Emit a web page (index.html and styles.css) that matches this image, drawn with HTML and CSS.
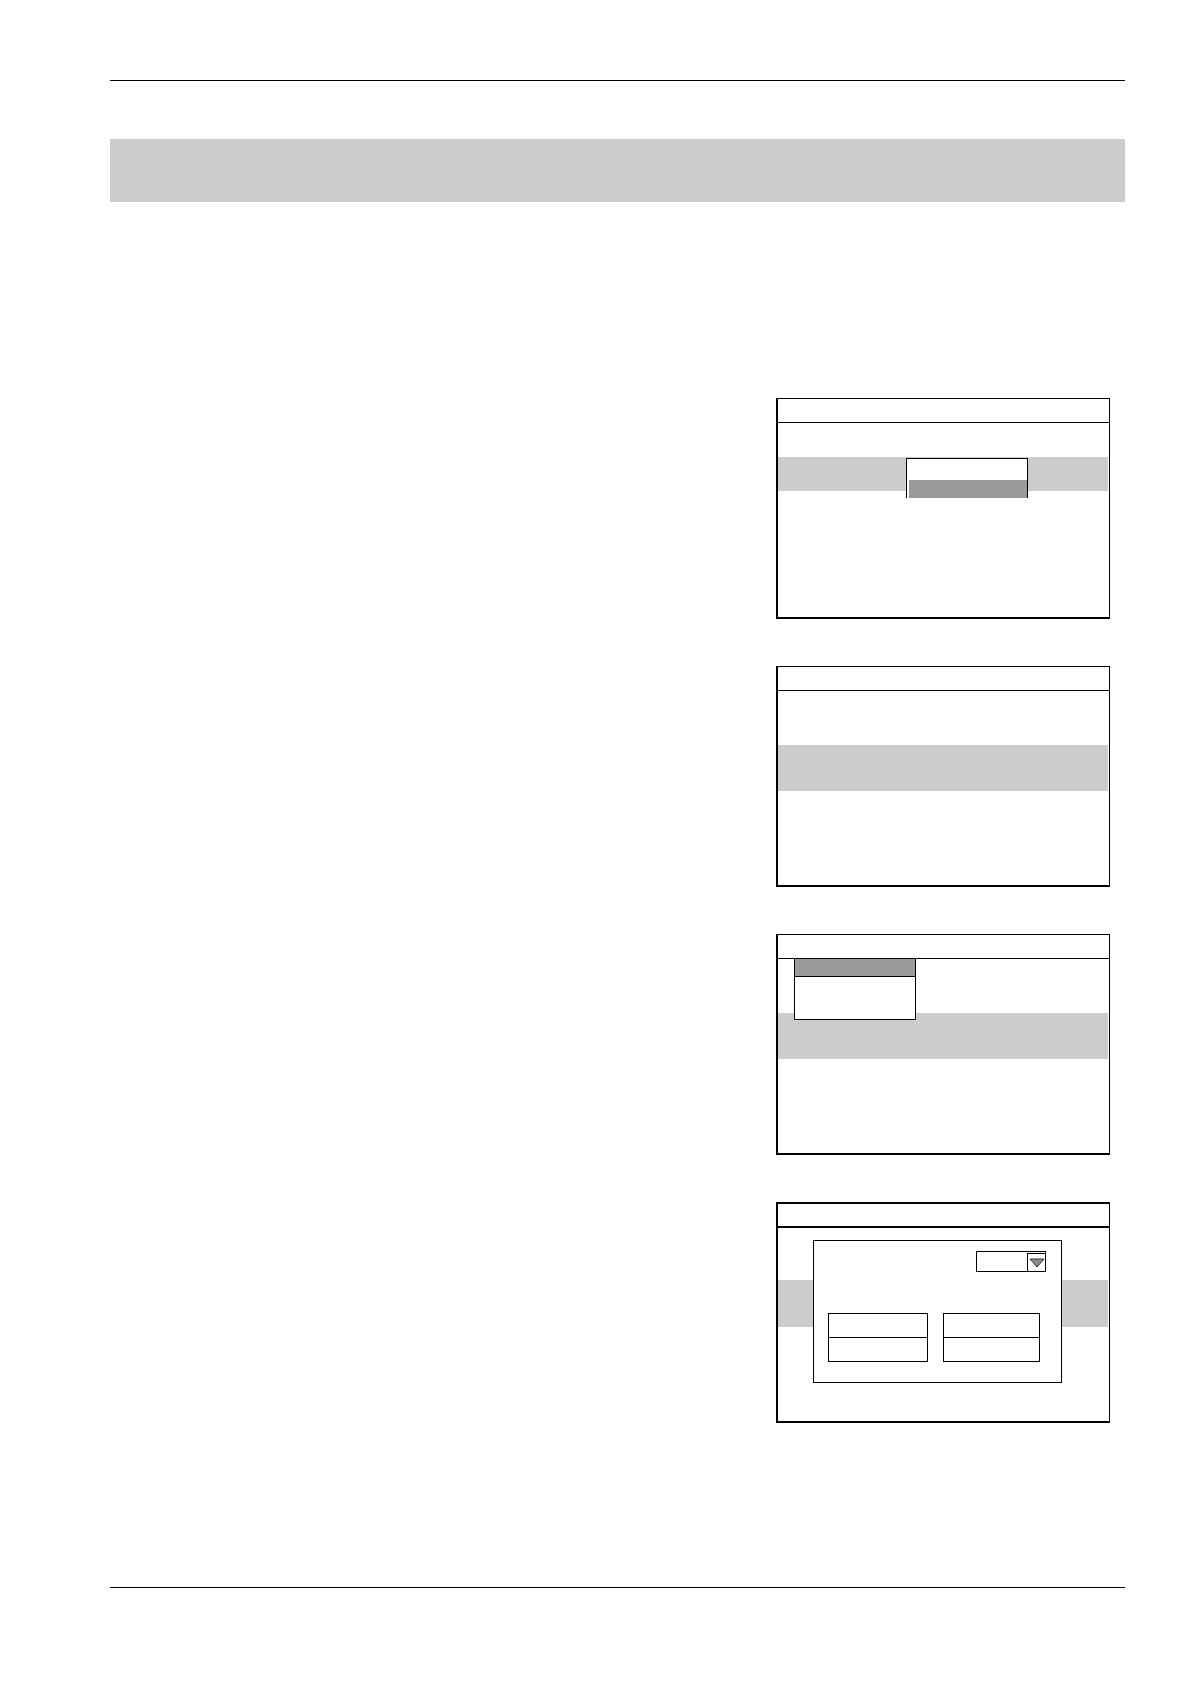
FILE: index.html
```html
<!DOCTYPE html>
<html lang="en">
<head>
<meta charset="utf-8">
<title>Page</title>
<link rel="stylesheet" href="styles.css">
</head>
<body>
<div class="page">
  <div class="rule"></div>
  <div class="banner"></div>
  <div class="content">
    <div class="text-col"></div>
    <div class="figures">
      <div class="win">
        <div class="titlebar"></div>
        <div class="win-body body-1">
          <div class="row row-1"></div>
          <div class="dropdown">
            <div class="dd-top"></div>
            <div class="dd-sel"></div>
          </div>
        </div>
      </div>
      <div class="win">
        <div class="titlebar"></div>
        <div class="win-body body-2">
          <div class="row row-2"></div>
        </div>
      </div>
      <div class="win">
        <div class="titlebar"></div>
        <div class="win-body body-2">
          <div class="row row-2"></div>
          <div class="menu">
            <div class="menu-head"></div>
          </div>
        </div>
      </div>
      <div class="win win-thick">
        <div class="titlebar"></div>
        <div class="win-body body-4">
          <div class="row row-2"></div>
          <div class="dialog">
            <div class="combo-row">
              <div class="combo">
                <div class="combo-field"></div>
                <div class="combo-btn">
                  <svg width="16" height="10" viewBox="0 0 16 10"><path d="M1 1 L15 1 L8 9 Z" fill="#8c8c8c" stroke="#333" stroke-width="1"/></svg>
                </div>
              </div>
            </div>
            <div class="btn-row">
              <div class="btn btn-left"><div class="btn-half"></div><div class="btn-half"></div></div>
              <div class="btn btn-right"><div class="btn-half"></div><div class="btn-half"></div></div>
            </div>
          </div>
        </div>
      </div>
    </div>
  </div>
  <div class="rule rule-bottom"></div>
</div>
</body>
</html>
```

FILE: styles.css
```css
html, body {
  margin: 0;
  padding: 0;
  background: #ffffff;
  font-family: "Liberation Sans", Arial, sans-serif;
}

.page {
  width: 1015px;
  margin-left: 110px;
  padding-top: 80px;
}

.rule {
  height: 1px;
  background: #000000;
}

.banner {
  margin-top: 58px;
  height: 63px;
  background: #cccccc;
}

.content {
  display: flex;
  margin-top: 196px;
}

.text-col {
  width: 666px;
  flex: none;
}

.figures {
  width: 334px;
  flex: none;
  display: flex;
  flex-direction: column;
  gap: 47px;
}

.win {
  box-sizing: border-box;
  height: 221px;
  border: 1px solid #000000;
  border-left-width: 2px;
  border-bottom-width: 2px;
  background: #ffffff;
}

.titlebar {
  height: 23px;
  border-bottom: 1px solid #000000;
}

.win-thick {
  border-top-width: 2px;
}

.win-thick .titlebar {
  height: 22px;
  border-bottom-width: 2px;
}

.win-body {
  position: relative;
}

.row {
  background: #cccccc;
  margin-right: 1px;
}

.body-1 {
  padding-top: 34px;
}

.row-1 {
  height: 34px;
}

.body-2 {
  padding-top: 54px;
}

.body-2 .row-2 {
  height: 46px;
}

.body-4 {
  padding-top: 52px;
}

.body-4 .row-2 {
  height: 47px;
}

.dropdown {
  position: absolute;
  left: 128px;
  top: 35px;
  width: 122px;
  height: 40px;
  box-sizing: border-box;
  border: 1px solid #000000;
  border-bottom: none;
  background: #ffffff;
  display: flex;
  flex-direction: column;
}

.dd-top {
  height: 21px;
}

.dd-sel {
  flex: 1;
  margin: 0 0 0 2px;
  background: #9a9a9a;
}

.menu {
  position: absolute;
  left: 16px;
  top: 0;
  width: 122px;
  height: 61px;
  box-sizing: border-box;
  border: 1px solid #000000;
  border-top: none;
  background: #ffffff;
}

.menu-head {
  height: 17px;
  background: #9a9a9a;
  border-bottom: 1px solid #000000;
}

.dialog {
  position: absolute;
  left: 35px;
  top: 12px;
  width: 249px;
  height: 143px;
  box-sizing: border-box;
  border: 1px solid #000000;
  background: #ffffff;
  padding: 10px 15px 0 14px;
}

.combo-row {
  display: flex;
  justify-content: flex-end;
}

.combo {
  width: 70px;
  height: 21px;
  box-sizing: border-box;
  border: 1px solid #000000;
  display: flex;
}

.combo-field {
  flex: 1;
}

.combo-btn {
  width: 18px;
  box-sizing: border-box;
  margin-top: 1px;
  border-left: 1px solid #000000;
  border-top: 1px solid #000000;
  display: flex;
  align-items: flex-start;
  justify-content: center;
  padding-top: 4px;
}

.combo-btn svg {
  display: block;
}

.btn-row {
  display: flex;
  gap: 15px;
  margin-top: 41px;
}

.btn {
  height: 49px;
  box-sizing: border-box;
  border: 1px solid #000000;
  display: flex;
  flex-direction: column;
}

.btn-left {
  width: 100px;
}

.btn-right {
  width: 97px;
}

.btn-half {
  flex: 1;
}

.btn-half + .btn-half {
  border-top: 1px solid #000000;
}

.rule-bottom {
  margin-top: 164px;
}
```
